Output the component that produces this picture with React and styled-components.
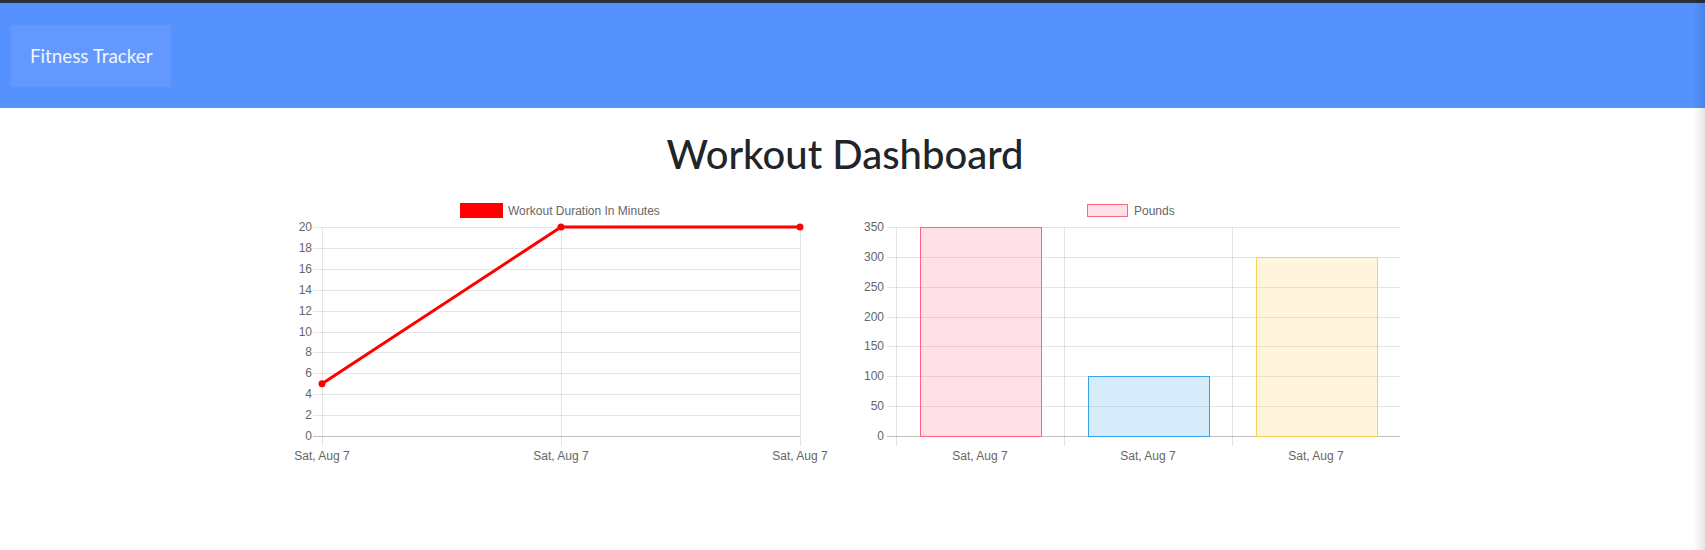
import React from 'react';
import styled, { createGlobalStyle } from 'styled-components';

const GlobalStyle = createGlobalStyle`
  *, *::before, *::after {
    box-sizing: border-box;
  }
  html, body {
    margin: 0;
    padding: 0;
    background: #fff;
  }
  body {
    font-family: "Segoe UI", Lato, "Liberation Sans", sans-serif;
    color: #212529;
  }
`;

const TopEdge = styled.div`
  height: 3px;
  background: #2b2f37;
`;

const Navbar = styled.nav`
  height: 105px;
  background: #5592fe;
  display: flex;
  align-items: center;
  padding: 0 11px;
`;

const Brand = styled.a`
  display: flex;
  align-items: center;
  height: 62px;
  padding: 0 18px 0 19px;
  background: #6399fe;
  color: #eef6ff;
  font-size: 18.8px;
  text-decoration: none;
`;

const Main = styled.main`
  padding-right: 15px;
`;

const Container = styled.div`
  max-width: 1140px;
  margin: 0 auto;
  padding: 0 15px;
`;

const Title = styled.h1`
  margin: 22px 0 16px;
  text-align: center;
  font-size: 40px;
  font-weight: 500;
  line-height: 48px;
  color: #212529;
`;

const Row = styled.div`
  display: grid;
  grid-template-columns: 1fr 1fr;
  column-gap: 30px;
`;

const ChartBox = styled.div`
  height: 270px;
  svg {
    display: block;
    font-family: "Liberation Sans", Arial, sans-serif;
    font-size: 12px;
  }
`;

const EdgeShade = styled.div`
  position: fixed;
  top: 0;
  right: 0;
  bottom: 0;
  width: 11px;
  pointer-events: none;
  background: linear-gradient(to right, rgba(0, 0, 0, 0), rgba(0, 0, 0, 0.1));
`;

const GRID = 'rgba(0,0,0,0.1)';
const ZERO = 'rgba(0,0,0,0.25)';
const TICK = '#666';

const W = 540;
const H = 270;
const TOP = 33;
const BOTTOM = 242;

const LineChart = () => {
  const left = 32;
  const right = 510;
  const labels = ['Sat, Aug 7', 'Sat, Aug 7', 'Sat, Aug 7'];
  const data = [5, 20, 20];
  const ticks = Array.from({ length: 11 }, (_, i) => i * 2);
  const yOf = v => BOTTOM - (v / 20) * (BOTTOM - TOP);
  const xOf = i => left + (i * (right - left)) / (labels.length - 1);
  const points = data.map((v, i) => `${xOf(i)},${yOf(v)}`).join(' ');

  return (
    <ChartBox>
      <svg width={W} height={H}>
        <rect x="171.5" y="10.5" width="40" height="12" fill="#ff0000" stroke="#ff0000" strokeWidth="3" />
        <text x="218" y="20.5" fill={TICK}>Workout Duration In Minutes</text>

        {ticks.map(t => (
          <g key={t}>
            <line
              x1="23" x2={right} y1={Math.round(yOf(t)) + 0.5} y2={Math.round(yOf(t)) + 0.5}
              stroke={t === 0 ? ZERO : GRID}
            />
            <text x="22" y={yOf(t) + 4} fill={TICK} textAnchor="end">{t}</text>
          </g>
        ))}

        {labels.map((l, i) => (
          <g key={i}>
            <line x1={xOf(i) + 0.5} x2={xOf(i) + 0.5} y1={TOP} y2={BOTTOM + 10} stroke={GRID} />
            <text x={xOf(i)} y="266" fill={TICK} textAnchor="middle">{l}</text>
          </g>
        ))}

        <polyline points={points} fill="none" stroke="#ff0000" strokeWidth="3" strokeLinejoin="round" />
        {data.map((v, i) => (
          <circle key={i} cx={xOf(i)} cy={yOf(v)} r="3.5" fill="#ff0000" />
        ))}
      </svg>
    </ChartBox>
  );
};

const BarChart = () => {
  const left = 36;
  const right = 540;
  const bars = [
    { label: 'Sat, Aug 7', value: 350, fill: 'rgba(255,99,132,0.2)', line: 'rgba(255,99,132,1)' },
    { label: 'Sat, Aug 7', value: 100, fill: 'rgba(54,162,235,0.2)', line: 'rgba(54,162,235,1)' },
    { label: 'Sat, Aug 7', value: 300, fill: 'rgba(255,206,86,0.2)', line: 'rgba(255,206,86,1)' }
  ];
  const ticks = Array.from({ length: 8 }, (_, i) => i * 50);
  const yOf = v => BOTTOM - (v / 350) * (BOTTOM - TOP);
  const band = (right - left) / bars.length;
  const barW = band * 0.72;

  return (
    <ChartBox>
      <svg width={W} height={H}>
        <rect x="227.5" y="10.5" width="40" height="12" fill="rgba(255,99,132,0.2)" stroke="rgba(255,99,132,1)" />
        <text x="274" y="20.5" fill={TICK}>Pounds</text>

        {ticks.map(t => (
          <g key={t}>
            <line
              x1="27" x2={right} y1={Math.round(yOf(t)) + 0.5} y2={Math.round(yOf(t)) + 0.5}
              stroke={t === 0 ? ZERO : GRID}
            />
            <text x="24" y={yOf(t) + 4} fill={TICK} textAnchor="end">{t}</text>
          </g>
        ))}

        {bars.map((b, i) => {
          const x0 = Math.round(left + i * band);
          const cx = left + (i + 0.5) * band;
          return (
            <g key={i}>
              <line x1={x0 + 0.5} x2={x0 + 0.5} y1={TOP} y2={BOTTOM + 10} stroke={GRID} />
              <rect
                x={Math.round(cx - barW / 2) + 0.5}
                y={Math.round(yOf(b.value)) + 0.5}
                width={Math.round(barW)}
                height={Math.round(BOTTOM - yOf(b.value))}
                fill={b.fill}
                stroke={b.line}
              />
              <text x={cx} y="266" fill={TICK} textAnchor="middle">{b.label}</text>
            </g>
          );
        })}
      </svg>
    </ChartBox>
  );
};

export default function App() {
  return (
    <>
      <GlobalStyle />
      <TopEdge />
      <Navbar>
        <Brand href="#">Fitness Tracker</Brand>
      </Navbar>
      <Main>
        <Container>
          <Title>Workout Dashboard</Title>
          <Row>
            <LineChart />
            <BarChart />
          </Row>
        </Container>
      </Main>
      <EdgeShade />
    </>
  );
}
